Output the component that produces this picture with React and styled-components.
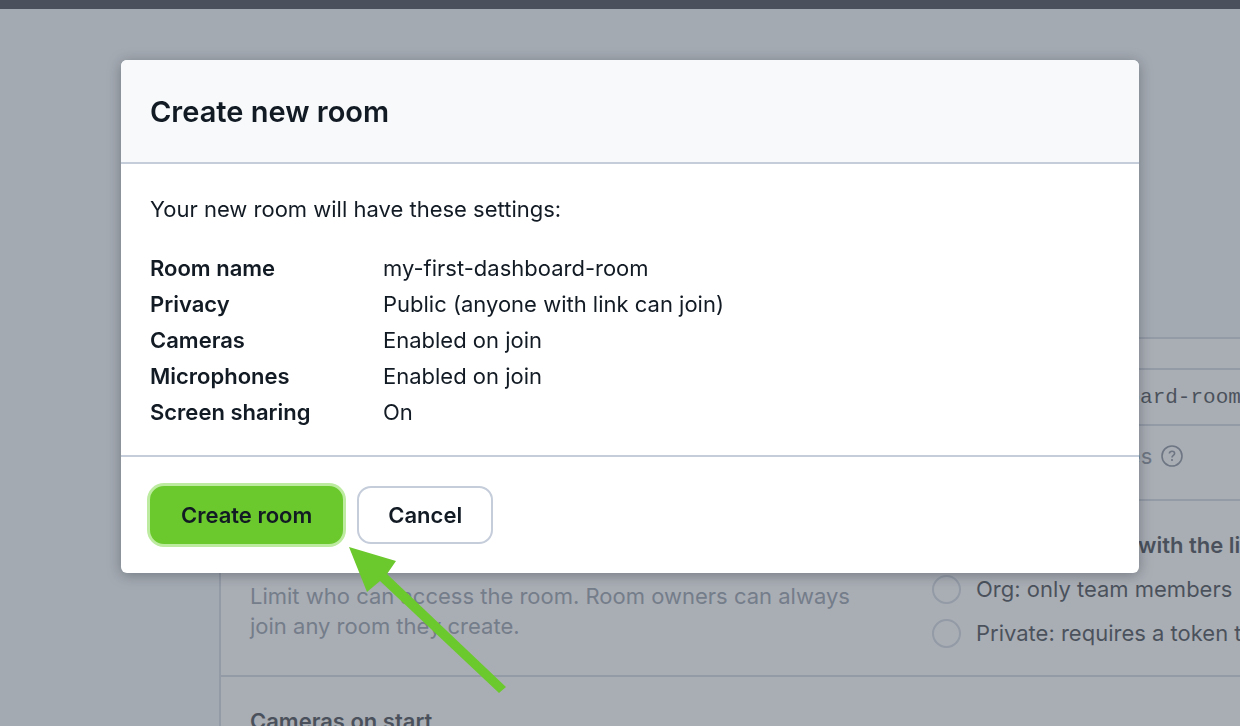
import React from "react";
import styled, { createGlobalStyle } from "styled-components";

const settings = [
  { label: "Room name", value: "my-first-dashboard-room" },
  { label: "Privacy", value: "Public (anyone with link can join)" },
  { label: "Cameras", value: "Enabled on join" },
  { label: "Microphones", value: "Enabled on join" },
  { label: "Screen sharing", value: "On" },
];

const privacyOptions = [
  { id: "public", text: "Public: anyone with the link" },
  { id: "org", text: "Org: only team members" },
  { id: "private", text: "Private: requires a token to join" },
];

const RoomForm = () => {
  const [privacy, setPrivacy] = React.useState("public");

  return (
    <Form>
      <FormRow>
        <div>
          <RowTitle as="label" htmlFor="room-name">Room name</RowTitle>
        </div>
        <div>
          <NameInput id="room-name" defaultValue="my-first-dashboard-room" />
          <Help>
            <span>Use letters or dashes</span>
            <HelpIcon />
          </Help>
        </div>
      </FormRow>
      <FormRow>
        <div>
          <RowTitle>Privacy</RowTitle>
          <RowText>
            Limit who can access the room. Room owners can always join any room
            they create.
          </RowText>
        </div>
        <Options>
          {privacyOptions.map((option) => (
            <Option key={option.id} $selected={privacy === option.id}>
              <input
                type="radio"
                name="privacy"
                checked={privacy === option.id}
                onChange={() => setPrivacy(option.id)}
              />
              {option.text}
            </Option>
          ))}
        </Options>
      </FormRow>
      <FormRow>
        <RowTitle>Cameras on start</RowTitle>
      </FormRow>
    </Form>
  );
};

const HelpIcon = () => (
  <svg width="24" height="24" viewBox="0 0 24 24" fill="none" stroke="currentColor" strokeWidth="1.6">
    <circle cx="12" cy="12" r="10" />
    <path d="M9.4 9.6c0-1.5 1.1-2.4 2.6-2.4s2.6.9 2.6 2.2c0 1.9-2.6 1.9-2.6 4.1" />
    <path d="M12 15v2" />
  </svg>
);

const CreateRoomModal = () => (
  <Modal role="dialog" aria-modal="true" aria-labelledby="modal-title">
    <ModalHeader>
      <h1 id="modal-title">Create new room</h1>
    </ModalHeader>
    <ModalBody>
      <p>Your new room will have these settings:</p>
      <Settings>
        {settings.map((item) => (
          <React.Fragment key={item.label}>
            <dt>{item.label}</dt>
            <dd>{item.value}</dd>
          </React.Fragment>
        ))}
      </Settings>
    </ModalBody>
    <ModalFooter>
      <Button type="button" $primary>Create room</Button>
      <Button type="button">Cancel</Button>
      <Arrow viewBox="0 0 160 150" aria-hidden="true">
        <path d="M1 1L48 15L39 28L158 141L151 147L32 35L19 46Z" fill="#6bc92d" />
      </Arrow>
    </ModalFooter>
  </Modal>
);

const App = () => (
  <Page>
    <GlobalStyle />
    <TopBar />
    <RoomForm />
    <Overlay>
      <CreateRoomModal />
    </Overlay>
  </Page>
);

export default App;

const GlobalStyle = createGlobalStyle`
  * {
    box-sizing: border-box;
  }

  body {
    margin: 0;
    font-family: Inter, "Liberation Sans", sans-serif;
    font-size: 22px;
    line-height: 30px;
    color: #121a24;
  }

  h1, h2, p, dl, dd {
    margin: 0;
  }
`;

const Page = styled.div`
  height: 100vh;
  overflow: hidden;
  background: #f3f8fa;
`;

const TopBar = styled.header`
  height: 9px;
  background: #121a24;
`;

const Form = styled.form`
  width: 1400px;
  margin: 328px 0 0 219px;
  background: #fff;
  border: 2px solid #c8d1dc;
`;

const FormRow = styled.section`
  display: grid;
  grid-template-columns: 682px 1fr;
  padding: 29px 29px 27px;

  & + & {
    border-top: 2px solid #c8d1dc;
  }
`;

const RowTitle = styled.h2`
  font-size: 22px;
  font-weight: 600;
`;

const RowText = styled.p`
  max-width: 620px;
  margin-top: 21px;
  color: #7c8796;
`;

const NameInput = styled.input`
  display: block;
  width: 100%;
  height: 58px;
  padding: 0 17px;
  border: 2px solid #c8d1dc;
  background: #fff;
  color: #121a24;
  font-family: "Liberation Mono", monospace;
  font-size: 21px;
`;

const Help = styled.div`
  display: flex;
  align-items: center;
  gap: 8px;
  height: 32px;
  margin-top: 14px;
  color: #6b7785;
`;

const Options = styled.div`
  display: flex;
  flex-direction: column;
  gap: 14px;
`;

const Option = styled.label`
  display: flex;
  align-items: center;
  gap: 15px;
  font-weight: ${(props) => (props.$selected ? 600 : 400)};

  input {
    appearance: none;
    width: 29px;
    height: 29px;
    margin: 0;
    border: 2px solid #c8d1dc;
    border-radius: 50%;
  }
`;

const Overlay = styled.div`
  position: fixed;
  inset: 0;
  padding: 60px 101px 0 121px;
  background: rgba(111, 118, 130, 0.6);
`;

const Modal = styled.div`
  border-radius: 6px;
  background: #fff;
  box-shadow: 0 2px 14px rgba(18, 26, 36, 0.35);
`;

const ModalHeader = styled.header`
  padding: 35px 29px 33px;
  border-bottom: 2px solid #c5cddb;
  border-radius: 6px 6px 0 0;
  background: #f7f9fa;

  h1 {
    font-size: 29px;
    font-weight: 600;
    line-height: 34px;
  }
`;

const ModalBody = styled.div`
  padding: 30px 29px 24px;
`;

const Settings = styled.dl`
  display: grid;
  grid-template-columns: 233px 1fr;
  margin-top: 26px;
  padding-bottom: 1px;
  line-height: 36px;

  dt {
    font-weight: 600;
  }
`;

const ModalFooter = styled.footer`
  position: relative;
  display: flex;
  gap: 14px;
  padding: 29px;
  border-top: 2px solid #c5cddb;
`;

const Button = styled.button`
  height: 58px;
  padding: 0 29px;
  border: 2px solid ${(props) => (props.$primary ? "#6bc92d" : "#c5cddb")};
  border-radius: 14px;
  background: ${(props) => (props.$primary ? "#6bc92d" : "#fff")};
  box-shadow: ${(props) => (props.$primary ? "0 0 0 3px #bdeba0" : "none")};
  color: #121a24;
  font-family: inherit;
  font-size: 22px;
  font-weight: 600;
`;

const Arrow = styled.svg`
  position: absolute;
  top: 89px;
  left: 227px;
  width: 160px;
  height: 150px;
`;
